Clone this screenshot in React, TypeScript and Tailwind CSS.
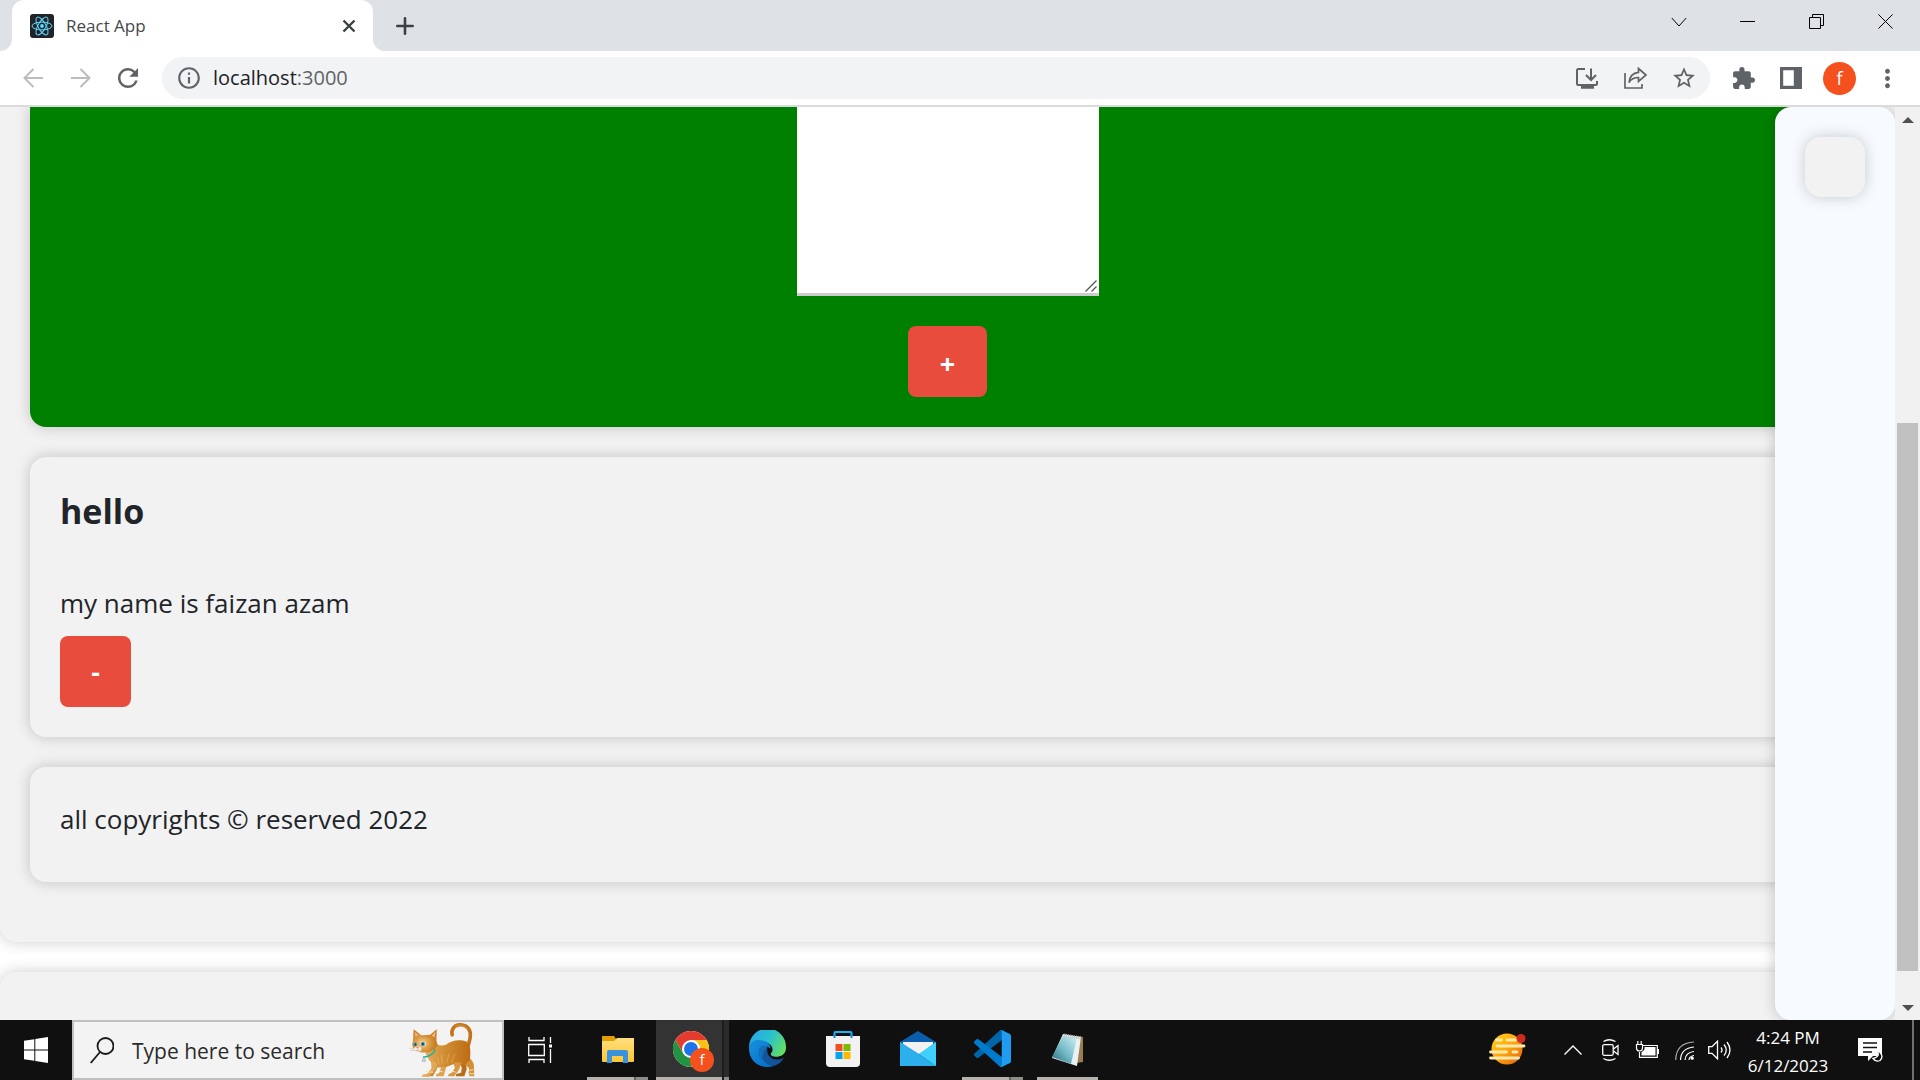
import type { ReactNode } from "react";
import { MdExtension, MdInfoOutline, MdMoreVert, MdRefresh, MdStarBorder } from "react-icons/md";

function ReactLogo() {
  return (
    <svg viewBox="0 0 24 24" className="size-6 shrink-0" aria-hidden="true">
      <rect width="24" height="24" rx="3" fill="#20232a" />
      <g fill="none" stroke="#61dafb" strokeWidth="1">
        <ellipse cx="12" cy="12" rx="10" ry="3.9" />
        <ellipse cx="12" cy="12" rx="10" ry="3.9" transform="rotate(60 12 12)" />
        <ellipse cx="12" cy="12" rx="10" ry="3.9" transform="rotate(120 12 12)" />
      </g>
      <circle cx="12" cy="12" r="1.9" fill="#61dafb" />
    </svg>
  );
}

function TabStrip() {
  return (
    <header className="flex h-[51px] shrink-0 items-stretch bg-[#dee1e6]">
      <div className="w-3 bg-white">
        <div className="size-full rounded-br-xl bg-[#dee1e6]" />
      </div>
      <div className="flex w-[361px] items-center rounded-t-xl bg-white pr-4 pl-[18px]">
        <ReactLogo />
        <span className="ml-3 flex-1 text-[17px] leading-6 text-[#45474a]">React App</span>
        <button type="button" aria-label="Close tab" className="grid size-4 place-items-center">
          <svg viewBox="0 0 16 16" className="size-4" fill="none" stroke="#3c4043" strokeWidth="2.4">
            <path d="M2.5 2.5l11 11M13.5 2.5l-11 11" />
          </svg>
        </button>
      </div>
      <div className="w-3 bg-white">
        <div className="size-full rounded-bl-xl bg-[#dee1e6]" />
      </div>
      <button type="button" aria-label="New tab" className="ml-[11px] flex items-center">
        <svg viewBox="0 0 18 18" className="size-[18px]" fill="none" stroke="#3c4043" strokeWidth="2.6" strokeLinecap="round">
          <path d="M9 1.3v15.4M1.3 9h15.4" />
        </svg>
      </button>
      <div className="ml-auto flex h-[43px] items-stretch text-black">
        <button type="button" aria-label="Search tabs" className="grid w-[68px] place-items-center">
          <svg viewBox="0 0 16 16" className="size-4" fill="none" stroke="currentColor">
            <path d="M.8 4l7.2 8 7.2-8" />
          </svg>
        </button>
        <button type="button" aria-label="Minimize" className="grid w-[69px] place-items-center">
          <svg viewBox="0 0 15 15" className="size-[15px]" fill="none" stroke="currentColor">
            <path d="M0 7.5h15" />
          </svg>
        </button>
        <button type="button" aria-label="Restore" className="grid w-[69px] place-items-center">
          <svg viewBox="0 0 15 15" className="size-[15px]" fill="none" stroke="currentColor">
            <path d="M.5 3.5h11v11H.5zM3.5 3.5v-3h11v11h-3" />
          </svg>
        </button>
        <button type="button" aria-label="Close" className="grid w-[69px] place-items-center">
          <svg viewBox="0 0 15 15" className="size-[15px]" fill="none" stroke="currentColor">
            <path d="M.4.4l14.2 14.2M14.6.4L.4 14.6" />
          </svg>
        </button>
      </div>
    </header>
  );
}

function Toolbar() {
  return (
    <div className="flex h-14 shrink-0 items-center border-b-2 border-[#dadbdd] bg-white text-[#5f6368]">
      <div className="flex w-[162px] items-center gap-6 pl-[21px]">
        <button type="button" aria-label="Back" className="text-[#babcbe]">
          <svg viewBox="0 0 24 24" className="size-6" fill="none" stroke="currentColor" strokeWidth="2">
            <path d="M22 12H3.500M12.500 3l-9 9 9 9" />
          </svg>
        </button>
        <button type="button" aria-label="Forward" className="text-[#babcbe]">
          <svg viewBox="0 0 24 24" className="size-6" fill="none" stroke="currentColor" strokeWidth="2">
            <path d="M2 12h18.500M11.500 3l9 9-9 9" />
          </svg>
        </button>
        <button type="button" aria-label="Reload">
          <MdRefresh className="size-[30px] -ml-1" />
        </button>
      </div>
      <div className="flex h-[42px] flex-1 items-center rounded-full bg-[#f1f3f4] pr-[13px] pl-[14px]">
        <button type="button" aria-label="View site information">
          <MdInfoOutline className="size-[26px]" />
        </button>
        <label className="ml-[11px] flex flex-1 text-xl">
          <span className="text-[#202124]">localhost</span>
          <span>:3000</span>
          <input type="text" aria-label="Address and search bar" className="min-w-0 flex-1 bg-transparent outline-none" />
        </label>
        <div className="flex items-center gap-6">
          <button type="button" aria-label="Install app">
            <svg viewBox="0 0 24 24" className="size-6" fill="none" stroke="currentColor" strokeWidth="2">
              <path d="M10 3H3.500a1.500 1.500 0 00-1.500 1.500v13A1.500 1.500 0 003.500 19h17a1.500 1.500 0 001.500-1.500V15" />
              <path d="M16 2.500v10M11 9l5 5 5-5" />
              <path d="M6 21h13" strokeWidth="3.500" />
            </svg>
          </button>
          <button type="button" aria-label="Share this page">
            <svg viewBox="0 0 24 24" className="size-6" fill="none" stroke="currentColor" strokeWidth="1.700">
              <path d="M2 7v15h17v-4" />
              <path d="M15.500 2.500L23 9l-7.500 6.500v-4C11 11.500 8 13 6 16.500 6.500 11 9.500 7 15.500 6.300z" />
            </svg>
          </button>
          <button type="button" aria-label="Bookmark this tab">
            <MdStarBorder className="size-[26px]" />
          </button>
        </div>
      </div>
      <div className="flex items-center pr-[18px] pl-[21px]">
        <button type="button" aria-label="Extensions">
          <MdExtension className="size-[25px]" />
        </button>
        <button type="button" aria-label="Side panel" className="ml-6">
          <svg viewBox="0 0 22 22" className="size-[22px]" fill="currentColor">
            <path d="M0 0h22v22H0zM3.200 3.200v15.600h10.600V3.200z" fillRule="evenodd" />
          </svg>
        </button>
        <button type="button" aria-label="Profile" className="ml-[21px] grid size-[33px] place-items-center rounded-full bg-[#f4511e] text-lg leading-none text-white">
          f
        </button>
        <button type="button" aria-label="Menu" className="ml-[17px]">
          <MdMoreVert className="size-[29px]" />
        </button>
      </div>
    </div>
  );
}

const cardShadow = "shadow-[0_0_15px_rgba(0,0,0,0.2)]";

function NotesPage() {
  return (
    <main className="relative flex min-h-0 flex-1 overflow-hidden bg-white text-[#212529]">
      <div className="min-w-0 flex-1">
        <div className={`flex flex-col gap-[30px] rounded-b-2xl bg-[#f2f2f2] px-[30px] pb-[60px] ${cardShadow}`}>
          <form className={`flex flex-col items-center rounded-b-2xl bg-[#008000] pb-[30px] ${cardShadow}`}>
            <div className="relative">
              <textarea aria-label="Note" className="block h-[189px] w-[302px] resize-none border-b-[3px] border-[#ccc] bg-white outline-none" />
              <svg viewBox="0 0 12 12" className="pointer-events-none absolute right-[2px] bottom-1 size-3" fill="none" stroke="#555" strokeWidth="1.300" aria-hidden="true">
                <path d="M.5 11.500L11.500.5M6.500 11.500l5-5" />
              </svg>
            </div>
            <button type="button" className="mt-[30px] h-[71px] w-[79px] rounded-lg bg-[#e74c3c] pt-1 text-[27px] leading-none font-bold text-white">
              +
            </button>
          </form>
          <article className={`rounded-2xl bg-[#f2f2f2] p-[30px] ${cardShadow}`}>
            <h1 className="text-[34px] leading-[48px] font-bold">hello</h1>
            <p className="mt-12 text-[26px] leading-10">my name is faizan azam</p>
            <button type="button" aria-label="Delete note" className="mt-[13px] block size-[71px] rounded-lg bg-[#e74c3c] text-[27px] leading-none font-bold text-white">
              -
            </button>
          </article>
          <footer className={`rounded-2xl bg-[#f2f2f2] px-[30px] pt-8 pb-[43px] ${cardShadow}`}>
            <p className="text-[26px] leading-10">all copyrights © reserved 2022</p>
          </footer>
        </div>
        <div className={`mt-[30px] h-24 rounded-2xl bg-[#f2f2f2] ${cardShadow}`} />
      </div>
      <aside className={`absolute inset-y-0 right-[25px] w-[120px] rounded-2xl bg-[#f7fbff] p-[30px] ${cardShadow}`}>
        <button type="button" aria-label="Open menu" className={`block size-[60px] rounded-2xl bg-[#f2f2f2] ${cardShadow}`} />
      </aside>
      <div className="relative flex w-[25px] shrink-0 flex-col items-center bg-[#f1f1f1]" aria-hidden="true">
        <svg viewBox="0 0 12 6" className="mt-[10px] mb-2 h-[6px] w-3 shrink-0" fill="#505050">
          <path d="M6 0l6 6H0z" />
        </svg>
        <div className="flex-[292]" />
        <div className="w-[21px] flex-[548] bg-[#c1c1c1]" />
        <div className="flex-[24]" />
        <svg viewBox="0 0 12 6" className="mt-[10px] mb-[9px] h-[6px] w-3 shrink-0" fill="#505050">
          <path d="M6 6l6-6H0z" />
        </svg>
      </div>
    </main>
  );
}

function Cat() {
  return (
    <svg viewBox="20 8 210 170" className="h-[56px] w-[70px] shrink-0" aria-hidden="true">
      <defs>
        <linearGradient id="catFur" x1="0" x2="1" y1="0" y2="0">
          <stop offset="0" stopColor="#e5ab57" />
          <stop offset=".5" stopColor="#cf8a30" />
          <stop offset="1" stopColor="#bd6c14" />
        </linearGradient>
        <radialGradient id="catHead" cx=".4" cy=".6">
          <stop offset="0" stopColor="#f5d9a8" />
          <stop offset=".5" stopColor="#dea24b" />
          <stop offset="1" stopColor="#c87f25" />
        </radialGradient>
        <linearGradient id="catLeg" x1="0" x2="0" y1="0" y2="1">
          <stop offset="0" stopColor="#cf8629" />
          <stop offset="1" stopColor="#d9953d" />
        </linearGradient>
      </defs>
      <path d="M200 96C206 70 218 46 206 29c-11-16-38-17-47-2-4 6-5 13-3 20" fill="none" stroke="#c4731a" strokeWidth="11" strokeLinecap="round" />
      <path d="M163 23c9-9 29-8 38 5" fill="none" stroke="#dda04f" strokeWidth="2" />
      <path d="M171 120l14 26-2 16-15 4-1 7h26l7-22-4-30z" fill="#b96c19" />
      <path d="M188 100c14 12 35 26 34 42l1 31h-14l-3-8 1-17-22-18z" fill="url(#catLeg)" />
      <path d="M92 120l3 26-7 17-7 3-1 7h17l12-21 2-23z" fill="#c98731" />
      <path d="M117 120l5 24-4 17-11 6v6h23l8-29 5-24z" fill="#dda34e" />
      <path d="M70 93l17 32 22 22 31-3 31-12 21 8 18-18c2-22 3-43-10-54-22-9-47-4-63 9-16 6-30-1-38-7z" fill="url(#catFur)" />
      <path d="M78 111l14 11 1 27-13 16-14 3-2 6h21l20-22 5-18z" fill="#e1aa56" />
      <path d="M160 132l4 16-10 15-9 3-1 7h18l16-22 5-21z" fill="#d79640" />
      <path d="M37 66l2-36 23 18 27-1 20-17-1 35 4 13c-9 19-35 26-55 21-17-3-27-16-20-33z" fill="url(#catHead)" />
      <path d="M42 37l2 16 10-5zM105 37L93 50l10 6z" fill="#efb080" />
      <path d="M64 49l3 8M75 48l-1 8M82 50l-3 7" fill="none" stroke="#c98738" strokeWidth="2" />
      <ellipse cx="51" cy="90" rx="12" ry="8" fill="#fff3df" />
      <ellipse cx="44" cy="76" rx="5" ry="6" fill="#2a9ac0" />
      <ellipse cx="68" cy="75" rx="8" ry="6" fill="#d9f5fa" />
      <ellipse cx="67" cy="75" rx="6" ry="6" fill="#2286b2" />
      <circle cx="44" cy="76" r="2.500" fill="#133c4c" />
      <circle cx="67" cy="75" r="3" fill="#133c4c" />
      <path d="M46 84h9l-4 5z" fill="#dc7668" />
      <path d="M51 89v4M44 94q7 4 13-1" fill="none" stroke="#af6546" strokeWidth="1.500" />
      <path d="M43 91l-18-4M43 94l-15 1M59 91l14-1" stroke="#9c9282" strokeWidth="1" />
      <path d="M67 115c18-1 34-10 37-24" fill="none" stroke="#23b2a5" strokeWidth="5" />
      <circle cx="70" cy="124" r="5" fill="#d7dad9" stroke="#8a9091" strokeWidth="1.500" />
      <path d="M112 116l4 20M124 108l2 28M146 104l-6 28M164 106l-10 25" stroke="#eec27d" strokeWidth="3" opacity=".5" />
      <path d="M75 158l12 3M89 159l10 2M115 157l12 2M154 157l12 3M207 155l13-2M208 165h14" stroke="#fae3ba" strokeWidth="3" />
    </svg>
  );
}

function ExplorerIcon() {
  return (
    <svg viewBox="0 0 36 36" className="size-9" aria-hidden="true">
      <defs>
        <linearGradient id="folder" x1="0" x2="0" y1="0" y2="1">
          <stop offset="0" stopColor="#ffdf7d" />
          <stop offset="1" stopColor="#fbc635" />
        </linearGradient>
      </defs>
      <path d="M2 5h12l2 3v5H2z" fill="#e3a006" />
      <path d="M2 10h12l3-3h17v23a1 1 0 01-1 1H3a1 1 0 01-1-1z" fill="url(#folder)" />
      <path d="M7 32V21q0-2 2-2h17q2 0 2 2v11h-5v-7H12v7z" fill="#3992dc" />
    </svg>
  );
}

function ChromeIcon() {
  return (
    <svg viewBox="0 0 38 38" className="size-[38px]" aria-hidden="true">
      <circle cx="19" cy="19" r="18" fill="#fff" />
      <path d="M19 10h15.600A18 18 0 003.400 10l7.800 13.500z" fill="#e33b2e" />
      <path d="M3.400 10A18 18 0 0019 37l7.800-13.500L19 28l-7.800-4.500z" fill="#229342" />
      <path d="M19 10a9 9 0 017.800 13.500L19 37a18 18 0 0015.600-27z" fill="#fbc116" />
      <circle cx="19" cy="19" r="9" fill="#fff" />
      <circle cx="19" cy="19" r="7" fill="#1a73e8" />
    </svg>
  );
}

function EdgeIcon() {
  return (
    <svg viewBox="0 0 36 36" className="size-[37px]" aria-hidden="true">
      <defs>
        <linearGradient id="edgeTop" x1="0" x2="1" y1=".3" y2=".7">
          <stop offset="0" stopColor="#27a9e8" />
          <stop offset=".5" stopColor="#2ac1cc" />
          <stop offset="1" stopColor="#68e05d" />
        </linearGradient>
        <linearGradient id="edgeBlue" x1="0" x2="1" y1="0" y2="1">
          <stop offset="0" stopColor="#1793df" />
          <stop offset="1" stopColor="#0669c5" />
        </linearGradient>
      </defs>
      <path d="M0 16A18 18 0 0136 17c0 7-5 9-10 9-4 0-6-2-4-4 2-3 1-8-6-10-7-2-13 0-16 4z" fill="url(#edgeTop)" />
      <path d="M0 18C0 11 6 9 11 10c5 0 10 3 10 8-6-5-11 0-9 6 1 6 7 10 12 11-12 4-24-4-24-17z" fill="url(#edgeBlue)" />
      <path d="M18 16c-9 3-8 16 6 19 4-1 8-4 10-8-7 4-15 1-16-5-.500-2-.500-4 0-6z" fill="#12539b" />
      <path d="M10 18c-3 8 3 16 14 17-11 0-15-9-6-19-3-1-6-1-8 2z" fill="#1071b8" />
    </svg>
  );
}

function StoreIcon() {
  return (
    <svg viewBox="0 0 36 38" className="h-[38px] w-9" aria-hidden="true">
      <path d="M9.500 8V3q0-1 1-1h15q1 0 1 1v5" fill="none" stroke="#1cb5f3" strokeWidth="2" />
      <path d="M1 6h34v27q0 4-4 4H5q-4 0-4-4z" fill="#f2f2f2" />
      <path d="M9.500 5v3M26.500 5v3" stroke="#1488dd" strokeWidth="2" />
      <path d="M10.500 14h7v7h-7z" fill="#f25022" />
      <path d="M18.500 14h7v7h-7z" fill="#7fba00" />
      <path d="M10.500 22h7v7h-7z" fill="#00a4ef" />
      <path d="M18.500 22h7v7h-7z" fill="#ffb900" />
    </svg>
  );
}

function MailIcon() {
  return (
    <svg viewBox="0 0 36 36" className="size-9" aria-hidden="true">
      <path d="M0 11L18 0l18 11v10H0z" fill="#0b5dad" />
      <path d="M3 11h30v9L18 27 3 20z" fill="#f2f2f2" />
      <path d="M0 11l19 12L36 11v24H0z" fill="#28a8ea" />
      <path d="M36 11L19 23l17 12z" fill="#3fd0fb" />
      <path d="M0 35l19-12 17 12z" fill="#168ee2" />
      <path d="M0 11l36 24H0z" fill="#2cafec" />
    </svg>
  );
}

function CodeIcon() {
  return (
    <svg viewBox="0 0 100 100" className="size-[37px]" aria-hidden="true">
      <path fill="#0065a9" d="M96.461 10.796L75.857.876a6.230 6.230 0 00-7.107 1.207L1.299 63.583a4.167 4.167 0 00.004 6.162l5.510 5.009a4.167 4.167 0 005.321.236l81.227-61.620c2.725-2.067 6.639-.124 6.639 3.297v-.240a6.250 6.250 0 00-3.539-5.631z" />
      <path fill="#007acc" d="M96.461 89.204l-20.604 9.921a6.230 6.230 0 01-7.107-1.208L1.299 36.417a4.167 4.167 0 01.004-6.162l5.510-5.009a4.167 4.167 0 015.321-.236l81.227 61.620c2.725 2.067 6.639.124 6.639-3.297v.240a6.250 6.250 0 01-3.539 5.631z" />
      <path fill="#1f9cf0" d="M75.858 99.126a6.230 6.230 0 01-7.108-1.209c2.306 2.306 6.250.673 6.250-2.589V4.672c0-3.262-3.944-4.895-6.250-2.589A6.230 6.230 0 0175.858.874l20.601 9.907A6.250 6.250 0 01100 16.413v67.174a6.250 6.250 0 01-3.541 5.633z" />
    </svg>
  );
}

function NotepadIcon() {
  return (
    <svg viewBox="0 0 36 36" className="size-9" aria-hidden="true">
      <defs>
        <linearGradient id="pad" x1="0" x2="1" y1="1" y2="0">
          <stop offset="0" stopColor="#226d78" />
          <stop offset=".5" stopColor="#79bdca" />
          <stop offset="1" stopColor="#d7f0f4" />
        </linearGradient>
      </defs>
      <path d="M26 5l7 1v25l-7 1z" fill="#9a7d4f" />
      <path d="M13 3l18 3-4 29L2 27z" fill="#e9f2f3" />
      <path d="M13 5l14 2-6 26L2 26z" fill="url(#pad)" />
      <path d="M14 4l17 3" stroke="#bbb" strokeWidth="3" strokeDasharray="1 1" />
    </svg>
  );
}

function TaskItem({ label, state, children }: { label: string; state?: "open" | "grouped" | "active"; children: ReactNode }) {
  if (state === "active") {
    return (
      <button type="button" aria-label={label} className="flex h-full w-[73px]">
        <span className="flex h-full flex-1 flex-col bg-[#333]">
          <span className="grid flex-1 place-items-center">{children}</span>
          <span className="h-[3px] bg-[#b5b2ae]" />
        </span>
        <span className="flex h-full w-[7px] flex-col border-l-2 border-[#1d1d1d] bg-[#2b2b2b]">
          <span className="mt-auto h-[3px] bg-[#8e8c89]" />
        </span>
      </button>
    );
  }
  return (
    <button type="button" aria-label={label} className="flex h-full w-[73px] flex-col items-center">
      <span className="grid flex-1 place-items-center">{children}</span>
      <span className="flex h-[3px] w-[61px]">
        {state && <span className="flex-1 bg-[#b5b2ae]" />}
        {state === "grouped" && <span className="w-[14px] border-l-2 border-[#636261] bg-[#8e8c89]" />}
      </span>
    </button>
  );
}

function Taskbar() {
  return (
    <footer className="flex h-[60px] shrink-0 items-center bg-[#101010] text-white">
      <button type="button" aria-label="Start" className="grid h-full w-[72px] place-items-center">
        <svg viewBox="0 0 24 26" className="h-[26px] w-6" fill="#fff">
          <path d="M0 3.800L10.300 2.300v10.200H0zM11.300 2.100L24 0v12.500H11.300zM0 13.500h10.300v10.200L0 22.200zM11.300 13.500H24V26l-12.700-1.900z" />
        </svg>
      </button>
      <label className="flex h-full w-[432px] items-center border-2 border-[#c0c0c0] bg-[#f3f3f3] pr-[25px] pl-4">
        <svg viewBox="0 0 24 27" className="h-[27px] w-6 shrink-0" fill="none" stroke="#1a1a1a" strokeWidth="1.800">
          <circle cx="15.500" cy="9" r="8" />
          <path d="M10 15L.7 26" />
        </svg>
        <input type="text" placeholder="Type here to search" aria-label="Type here to search" className="ml-[18px] min-w-0 flex-1 bg-transparent pt-1 text-[21px] outline-none placeholder:text-[#2b2b2b] placeholder:opacity-100" />
        <Cat />
      </label>
      <button type="button" aria-label="Task view" className="grid h-full w-[72px] place-items-center">
        <svg viewBox="0 0 25 26" className="h-[26px] w-[25px]" fill="none" stroke="#fff" strokeWidth="1.300">
          <path d="M1 0v3.500h15V0M1 26v-3.500h15V26M.700 7.500h15.600v11H.700zM22.500 0v6M22.500 12v14" />
          <path d="M21 7.500h3v3h-3z" fill="#fff" stroke="none" />
        </svg>
      </button>
      <nav className="ml-[5px] flex h-full gap-[2px]" aria-label="Pinned apps">
        <TaskItem label="File Explorer" state="grouped">
          <ExplorerIcon />
        </TaskItem>
        <TaskItem label="Google Chrome" state="active">
          <span className="relative ml-1">
            <ChromeIcon />
            <span className="absolute -right-1 -bottom-1 grid size-6 place-items-center rounded-full bg-[#f4511e] text-sm leading-none">f</span>
          </span>
        </TaskItem>
        <TaskItem label="Microsoft Edge">
          <EdgeIcon />
        </TaskItem>
        <TaskItem label="Microsoft Store">
          <StoreIcon />
        </TaskItem>
        <TaskItem label="Mail">
          <MailIcon />
        </TaskItem>
        <TaskItem label="Visual Studio Code" state="grouped">
          <CodeIcon />
        </TaskItem>
        <TaskItem label="Notepad" state="open">
          <NotepadIcon />
        </TaskItem>
      </nav>
      <div className="ml-auto flex h-full items-center">
        <button type="button" aria-label="Weather" className="mr-[38px]">
          <svg viewBox="0 0 37 34" className="h-[34px] w-[37px]">
            <defs>
              <linearGradient id="sun" x1="0" x2="1" y1="0" y2="1">
                <stop offset="0" stopColor="#ffd515" />
                <stop offset=".5" stopColor="#fba50e" />
                <stop offset="1" stopColor="#e45b0c" />
              </linearGradient>
            </defs>
            <circle cx="18" cy="16" r="15.500" fill="url(#sun)" />
            <path d="M7.500 7h5M18 7h9M8 13h27M1.500 19h16M24 19h4M1.500 25h28" stroke="#ffe9ad" strokeWidth="2.800" strokeLinecap="round" />
            <circle cx="32" cy="5.500" r="4.500" fill="#cf2a1d" />
          </svg>
        </button>
        <button type="button" aria-label="Show hidden icons" className="mr-5">
          <svg viewBox="0 0 18 10" className="h-[10px] w-[18px]" fill="none" stroke="#fff" strokeWidth="1.400">
            <path d="M.5 9.500L9 1l8.500 8.500" />
          </svg>
        </button>
        <button type="button" aria-label="Meet now" className="mr-4">
          <svg viewBox="0 0 17 22" className="h-[22px] w-[17px]" fill="none" stroke="#fff" strokeWidth="1.300">
            <rect x=".7" y="5.700" width="10.500" height="10.600" rx="1.500" />
            <path d="M11.500 10l4.500-3.500v9L11.500 12M1.500 2.500q5.500-3.500 12 0M1.500 19.500q5.500 3.500 12 0" />
          </svg>
        </button>
        <button type="button" aria-label="Battery" className="mr-4">
          <svg viewBox="0 0 24 18" className="h-[18px] w-6" fill="none" stroke="#fff" strokeWidth="1.200">
            <path d="M8 4.500h14.300v11.800H4.500V11M1.500 3.500h6v3.500q0 3-3 3t-3-3zM2.800 3.500V0M6.200 3.500V0M23.400 8v5" />
            <path d="M9.500 6h11v8.500h-14V11q2.500-1 3-3z" fill="#fff" stroke="none" />
          </svg>
        </button>
        <button type="button" aria-label="Network" className="mr-[14px]">
          <svg viewBox="0 0 19 19" className="size-[19px]" fill="none" stroke="#fff" strokeWidth="1.200">
            <path d="M.7 19Q1 2 19 1" opacity=".65" />
            <path d="M5.500 19Q6 7 19 6M10 19q.5-7.500 9-8.500M14 19q0-3.500 5-4.500" />
            <circle cx="17.200" cy="17.200" r="1.600" fill="#fff" stroke="none" />
          </svg>
        </button>
        <button type="button" aria-label="Volume" className="mr-3">
          <svg viewBox="0 0 23 20" className="h-5 w-[23px]" fill="none" stroke="#fff" strokeWidth="1.300">
            <path d="M.7 6.700H4l5.500-5.500v17.600L4 13.300H.7zM13 7.500q2 2.500 0 5M16 4.500q4.500 5.500 0 11M19 2q6 8 0 16" />
          </svg>
        </button>
        <button type="button" className="w-[90px] pt-1 text-center text-[17px] leading-7">
          <span className="block">4:24 PM</span>
          <span className="block">6/12/2023</span>
        </button>
        <button type="button" aria-label="Notifications" className="mr-[29px] ml-[25px]">
          <svg viewBox="0 0 25 25" className="size-[25px]">
            <path d="M0 0h24v18h-9l-5 5v-5H0z" fill="#fff" />
            <path d="M5 5h14M5 9.500h14M5 14h9" stroke="#101010" strokeWidth="1.300" />
            <path d="M19 12.500q4 6-4 8 3 4 7 2 4-4 0-8-1-1.500-3-2z" fill="#101010" stroke="#fff" strokeWidth="1.300" />
          </svg>
        </button>
        <div className="mr-[6px] h-full w-[2px] bg-[#707070]" />
      </div>
    </footer>
  );
}

export default function App() {
  return (
    <div className="flex h-screen flex-col overflow-hidden font-['Open_Sans','Noto_Sans',sans-serif]">
      <TabStrip />
      <Toolbar />
      <NotesPage />
      <Taskbar />
    </div>
  );
}
